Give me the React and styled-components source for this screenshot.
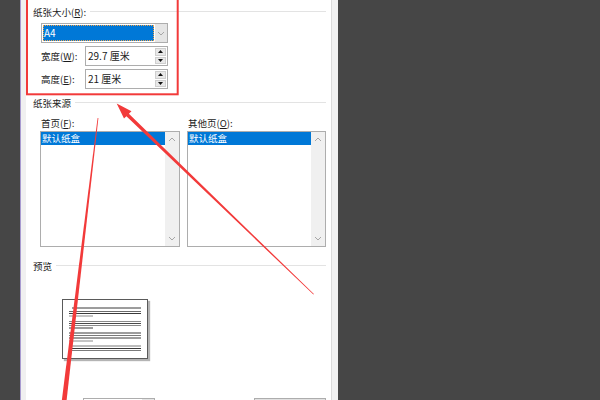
import React from 'react';
import styled, { createGlobalStyle } from 'styled-components';

const GlobalStyle = createGlobalStyle`
    html, body {
        margin: 0;
        padding: 0;
        background: #464646;
    }
    * {
        box-sizing: border-box;
    }
`

const previewLines = [
    { y: 9, x1: 10, x2: 79, c: '#3a3a3a' },
    { y: 12.5, x1: 7, x2: 79, c: '#6a6a6a' },
    { y: 14.5, x1: 7, x2: 79, c: '#3a3a3a' },
    { y: 17, x1: 7, x2: 31, c: '#8a8a8a' },
    { y: 22.5, x1: 7, x2: 79, c: '#8a8a8a' },
    { y: 24.5, x1: 7, x2: 79, c: '#4a4a4a' },
    { y: 26.5, x1: 7, x2: 79, c: '#8a8a8a' },
    { y: 29, x1: 7, x2: 31, c: '#3a3a3a' },
    { y: 34, x1: 7, x2: 79, c: '#3a3a3a' },
    { y: 36.5, x1: 7, x2: 79, c: '#7a7a7a' },
    { y: 39, x1: 7, x2: 79, c: '#3a3a3a' },
    { y: 42, x1: 7, x2: 31, c: '#8a8a8a' },
    { y: 47, x1: 7, x2: 79, c: '#7a7a7a' },
    { y: 49.5, x1: 7, x2: 79, c: '#3a3a3a' },
    { y: 51.5, x1: 7, x2: 79, c: '#7a7a7a' },
];

function Key({ children }) {
    return <u>{children}</u>;
}

function Chevron({ down }) {
    return (
        <svg width="8" height="5" viewBox="0 0 8 5">
            <polyline
                points={down ? "1,1 4,4 7,1" : "1,4 4,1 7,4"}
                fill="none"
                stroke="#a6a6a6"
                strokeWidth="1"
            />
        </svg>
    );
}

function SpinBox({ value }) {
    return (
        <Spin>
            <SpinText>{value}</SpinText>
            <SpinButtons>
                <SpinButton>
                    <svg width="5" height="3" viewBox="0 0 5 3"><polygon points="0,3 2.5,0 5,3" fill="#111" /></svg>
                </SpinButton>
                <SpinButton>
                    <svg width="5" height="3" viewBox="0 0 5 3"><polygon points="0,0 2.5,3 5,0" fill="#111" /></svg>
                </SpinButton>
            </SpinButtons>
        </Spin>
    );
}

function ListBox() {
    return (
        <List>
            <ListItems>
                <ListItem $selected>默认纸盒</ListItem>
            </ListItems>
            <ScrollBar>
                <Chevron />
                <Chevron down />
            </ScrollBar>
        </List>
    );
}

export default function App() {
    return (
        <Screen>
            <GlobalStyle />
            <LeftGap />
            <Dialog>
                <Panel>
                    <GroupTitle $top={4}>
                        <span>纸张大小(<Key>R</Key>):</span>
                        <Rule />
                    </GroupTitle>
                    <SizeGroup>
                        <Combo>
                            <ComboValue>A4</ComboValue>
                            <ComboArrow><Chevron down /></ComboArrow>
                        </Combo>
                        <FieldRow>
                            <FieldLabel>宽度(<Key>W</Key>):</FieldLabel>
                            <SpinBox value="29.7 厘米" />
                        </FieldRow>
                        <FieldRow>
                            <FieldLabel>高度(<Key>E</Key>):</FieldLabel>
                            <SpinBox value="21 厘米" />
                        </FieldRow>
                    </SizeGroup>

                    <GroupTitle $top={6}>
                        <span>纸张来源</span>
                        <Rule />
                    </GroupTitle>
                    <SourceGrid>
                        <SourceLabel>首页(<Key>F</Key>):</SourceLabel>
                        <SourceLabel>其他页(<Key>O</Key>):</SourceLabel>
                        <ListBox />
                        <ListBox />
                    </SourceGrid>

                    <GroupTitle $top={11}>
                        <span>预览</span>
                        <Rule />
                    </GroupTitle>
                    <PreviewPage>
                        <svg width="84" height="58" viewBox="1 1 84 58">
                            {previewLines.map((l, i) => (
                                <line key={i} x1={l.x1} x2={l.x2} y1={l.y} y2={l.y} stroke={l.c} strokeWidth="1" />
                            ))}
                        </svg>
                    </PreviewPage>

                    <BottomRow>
                        <Combo $width={72}>
                            <ComboValue $plain />
                            <ComboArrow />
                        </Combo>
                        <DefaultButton />
                    </BottomRow>
                </Panel>
            </Dialog>

            <Annotations width="600" height="400" viewBox="0 0 600 400">
                <rect x="27" y="-10" width="150.7" height="104.3" fill="none" stroke="#f23a3a" strokeWidth="2" />
                <polygon
                    points="116.7,103.5 124,118.5 126.4,116.3 313.4,294.6 313.9,294.1 128.9,113.7 131.5,111.2"
                    fill="#f23a3a"
                />
                <polygon points="97.6,118 98.4,118 66.4,402 61.6,402" fill="#f23a3a" />
            </Annotations>
        </Screen>
    );
}

const Screen = styled.div`
    position: relative;
    width: 600px;
    height: 400px;
    overflow: hidden;
    display: flex;
    background: #464646;
    font-family: "Microsoft YaHei", "Noto Sans CJK SC", sans-serif;
    font-size: 9.5px;
    color: #1b1b1b;

    u {
        text-decoration: underline;
        text-underline-offset: 1px;
    }
`
const LeftGap = styled.div`
    width: 20px;
    flex-shrink: 0;
`
const Dialog = styled.div`
    width: 318px;
    height: 100%;
    flex-shrink: 0;
    display: flex;
    padding: 0 6px 0 5px;
    background: #f0f0f0;
    border-left: 1px solid #a89bd0;
`
const Panel = styled.div`
    flex: 1;
    display: flex;
    flex-direction: column;
    padding: 0 5px 0 7px;
    background: #ffffff;
    border-right: 1px solid #dadada;
`
const GroupTitle = styled.div`
    height: 16px;
    margin-top: ${p => p.$top}px;
    display: flex;
    align-items: center;
    gap: 4px;
    white-space: nowrap;
    line-height: 16px;
`
const Rule = styled.div`
    flex: 1;
    height: 1px;
    margin-top: -1px;
    background: #e3e3e3;
`
const SizeGroup = styled.div`
    display: flex;
    flex-direction: column;
    gap: 3px;
    padding: 3px 0 0 8px;
`
const Combo = styled.div`
    width: ${p => p.$width || 127}px;
    height: 20px;
    display: flex;
    border: 1px solid #adadad;
    background: #ffffff;
`
const ComboValue = styled.div`
    flex: 1;
    margin: 1px;
    padding-left: 1px;
    line-height: 16px;
    font-size: 10px;
    background: ${p => p.$plain ? '#ffffff' : '#0078d7'};
    color: ${p => p.$plain ? '#1b1b1b' : '#ffffff'};
    outline: ${p => p.$plain ? 'none' : '1px dotted #f2a24a'};
    outline-offset: -1px;
`
const ComboArrow = styled.div`
    width: 12px;
    display: flex;
    align-items: center;
    justify-content: center;
    background: #e5e5e5;
`
const FieldRow = styled.div`
    display: flex;
    align-items: center;
    height: 20px;
`
const FieldLabel = styled.div`
    width: 44px;
    white-space: nowrap;
`
const Spin = styled.div`
    width: 83px;
    height: 20px;
    display: flex;
    border: 1px solid #adadad;
    background: #ffffff;
`
const SpinText = styled.div`
    flex: 1;
    padding-left: 2px;
    line-height: 18px;
    font-size: 10px;
`
const SpinButtons = styled.div`
    width: 11px;
    margin: 1px;
    display: flex;
    flex-direction: column;
    gap: 1px;
`
const SpinButton = styled.div`
    flex: 1;
    display: flex;
    align-items: center;
    justify-content: center;
    background: #e8e8e8;
    border: 1px solid #cfcfcf;
`
const SourceGrid = styled.div`
    display: grid;
    grid-template-columns: 140px 139px;
    grid-template-rows: 16px 116px;
    column-gap: 7px;
    margin-top: 4px;
    padding-left: 7px;
`
const SourceLabel = styled.div`
    padding-left: 1px;
    line-height: 16px;
    white-space: nowrap;
`
const List = styled.div`
    display: flex;
    border: 1px solid #adadad;
    background: #ffffff;
`
const ListItems = styled.div`
    flex: 1;
`
const ListItem = styled.div`
    height: 13px;
    line-height: 13px;
    padding-left: 1px;
    background: ${p => p.$selected ? '#0078d7' : 'transparent'};
    color: ${p => p.$selected ? '#ffffff' : '#1b1b1b'};
`
const ScrollBar = styled.div`
    width: 14px;
    display: flex;
    flex-direction: column;
    align-items: center;
    justify-content: space-between;
    padding: 5px 0;
    background: #f0f0f0;
`
const PreviewPage = styled.div`
    width: 86px;
    height: 60px;
    margin: 25px 0 0 29px;
    border: 1px solid #5a5a5a;
    background: #ffffff;
    box-shadow: 2px 2px 1px #b4b4b4;

    svg {
        display: block;
    }
`
const BottomRow = styled.div`
    display: flex;
    justify-content: space-between;
    margin-top: 39px;
    padding-left: 50px;
`
const DefaultButton = styled.div`
    width: 72px;
    height: 22px;
    border: 1px solid #adadad;
    background: #e1e1e1;
`
const Annotations = styled.svg`
    position: absolute;
    left: 0;
    top: 0;
    pointer-events: none;
`
